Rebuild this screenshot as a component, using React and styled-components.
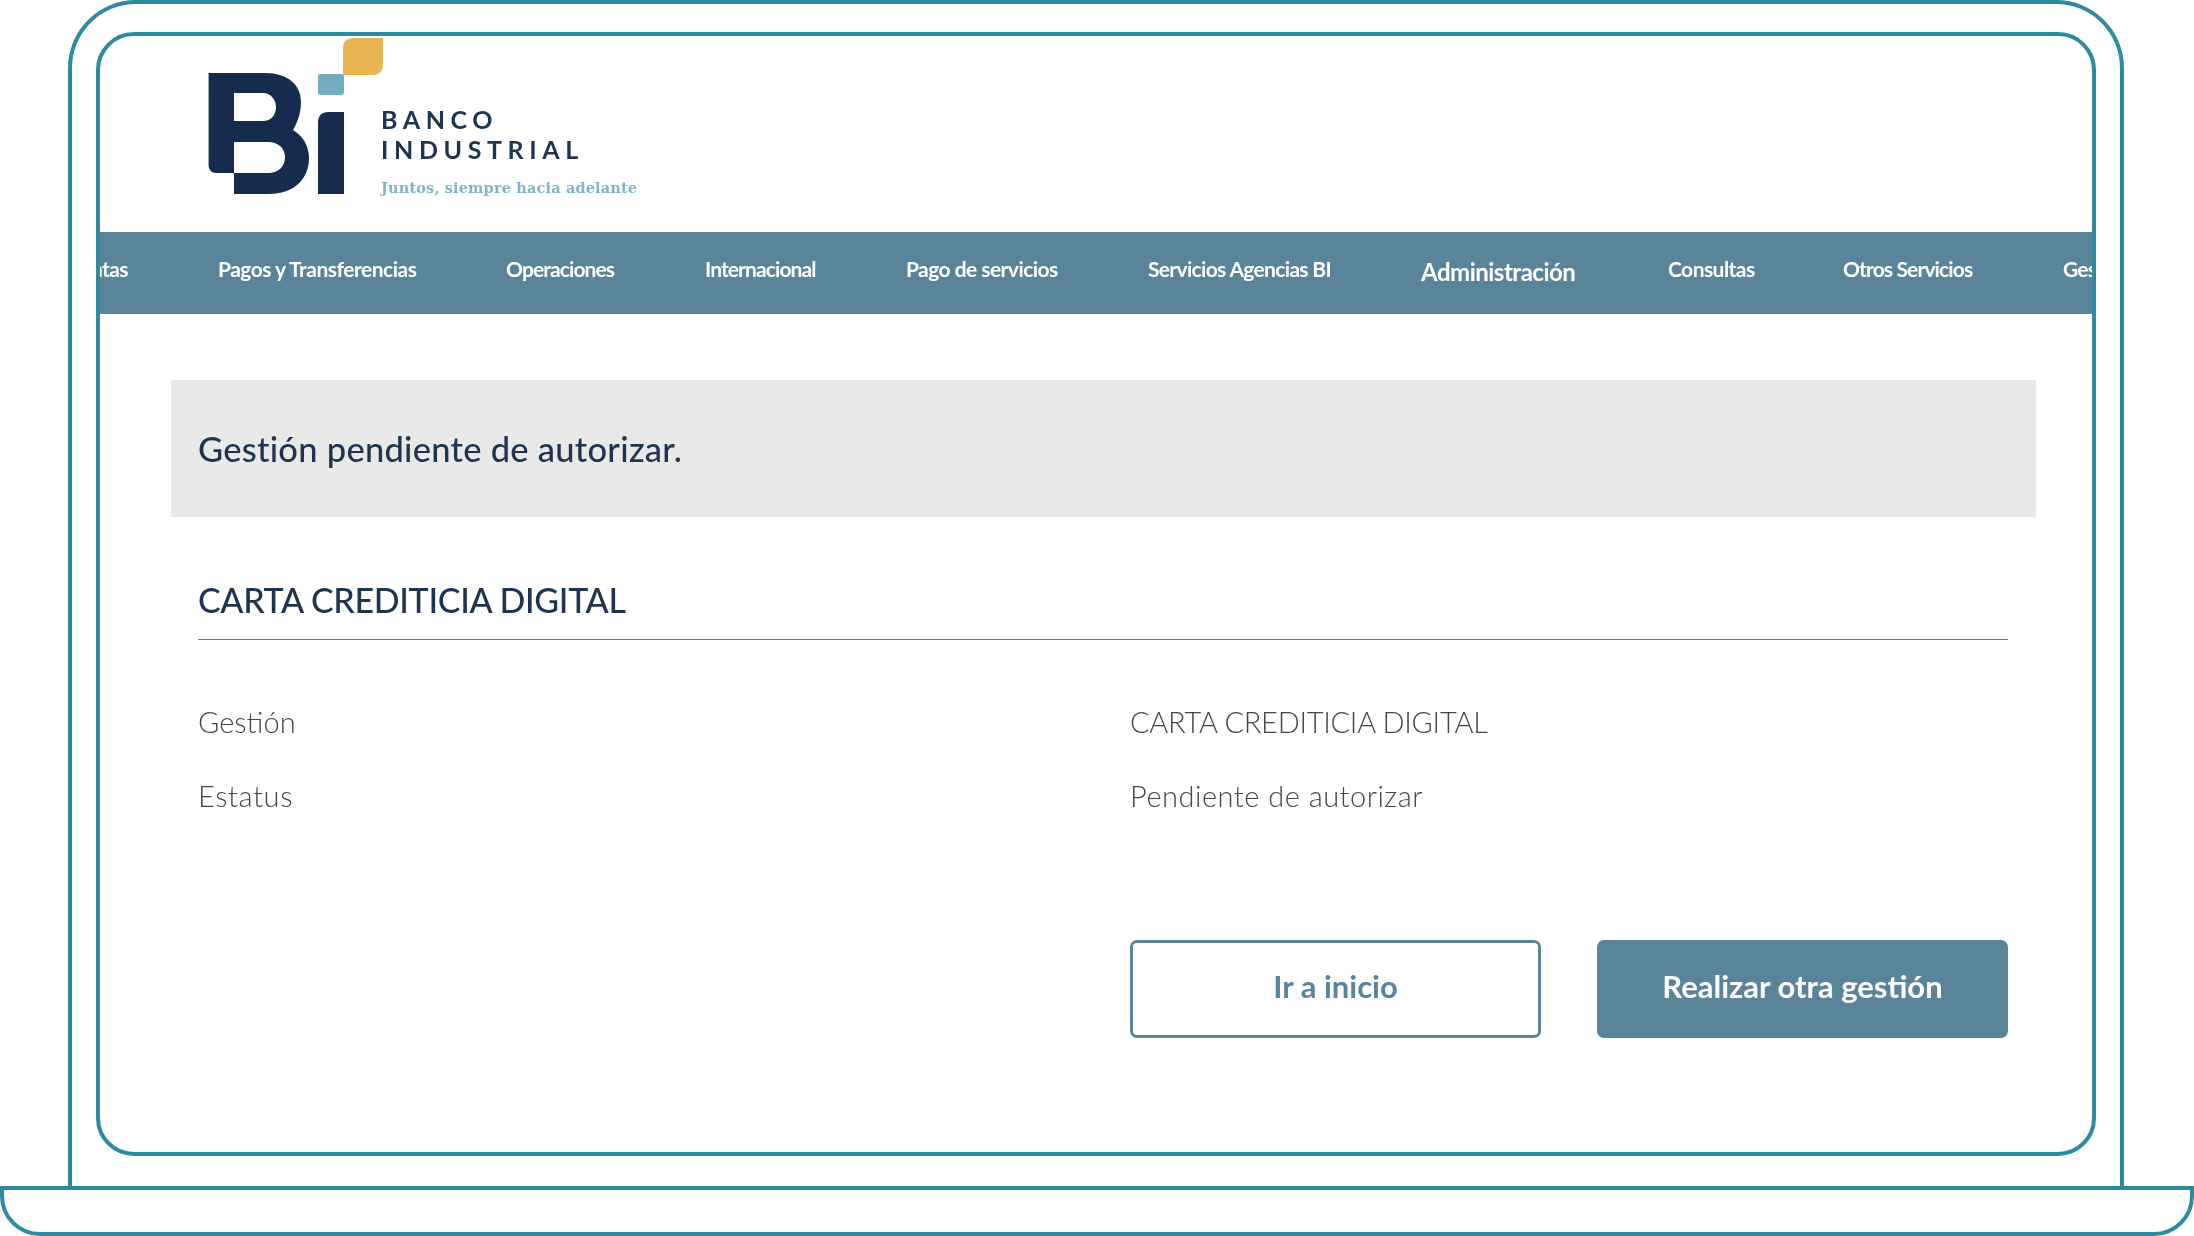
import React from "react";
import styled, { createGlobalStyle } from "styled-components";

const Global = createGlobalStyle`
  html, body { margin: 0; padding: 0; background: #fff; }
  * { box-sizing: border-box; }
`;

const teal = "#2e8b9f";
const slate = "#5a8499";
const navy = "#1f3450";

const Page = styled.div`
  width: 2194px;
  height: 1236px;
  background: #fff;
  overflow: hidden;
  font-family: "Lato", "Liberation Sans", sans-serif;
`;
const Lid = styled.div`
  width: 2056px;
  height: 1186px;
  margin-left: 68px;
  padding: 28px 24px 0;
  border: 4px solid ${teal};
  border-bottom: 0;
  border-radius: 68px 68px 0 0;
`;
const Base = styled.div`
  height: 50px;
  border: 4px solid ${teal};
  border-radius: 0 0 40px 40px;
`;
const Screen = styled.div`
  height: 1124px;
  border: 4px solid ${teal};
  border-radius: 38px;
  overflow: hidden;
  background: #fff;
`;
const Header = styled.header`
  height: 196px;
  padding: 2px 0 0 108px;
  display: flex;
  align-items: flex-start;
`;
const Mark = styled.svg`
  width: 175px;
  height: 156px;
  flex: none;
  filter: blur(0.5px);
`;
const Brand = styled.div`
  margin: 66px 0 0 -2px;
  filter: blur(0.5px);
`;
const BrandName = styled.div`
  font-weight: 700;
  font-size: 25px;
  line-height: 30px;
  letter-spacing: ${(p) => p.$ls}px;
  color: ${navy};
`;
const Tagline = styled.div`
  margin-top: 15px;
  font-family: "DejaVu Serif", serif;
  font-weight: 700;
  font-size: 14.5px;
  line-height: 18px;
  letter-spacing: 0.15px;
  color: #82b4c9;
`;
const Nav = styled.nav`
  height: 82px;
  background: ${slate};
  overflow: hidden;
  display: flex;
  align-items: center;
  gap: 90px;
  color: #fff;
  white-space: nowrap;
`;
const NavItem = styled.span`
  flex: none;
  width: ${(p) => p.$w}px;
  margin-left: ${(p) => p.$ml || 0}px;
  margin-top: ${(p) => (p.$big ? -3 : -10)}px;
  font-weight: 700;
  font-size: ${(p) => (p.$big ? 24 : 21)}px;
  letter-spacing: ${(p) => p.$ls}px;
  filter: blur(0.5px);
`;
const Content = styled.main`
  padding: 66px 56px 0 71px;
`;
const Banner = styled.div`
  height: 137px;
  background: #e9e9e9;
  padding-left: 27px;
  display: flex;
  align-items: center;
  font-size: 34.5px;
  font-weight: 500;
  letter-spacing: 0.25px;
  color: ${navy};
  filter: blur(0.4px);
`;
const Section = styled.section`
  padding: 0 28px 0 27px;
`;
const SectionTitle = styled.h2`
  margin: 0;
  height: 123px;
  padding-bottom: 19px;
  display: flex;
  align-items: flex-end;
  font-size: 34px;
  font-weight: 500;
  letter-spacing: -0.32px;
  color: ${navy};
  border-bottom: 1px solid #777;
  filter: blur(0.3px);
`;
const Rows = styled.div`
  margin-top: 67px;
  display: grid;
  grid-template-columns: 932px 1fr;
  row-gap: 45px;
  font-size: 29px;
  font-weight: 300;
  line-height: 29px;
  color: #454545;
  filter: blur(0.3px);
`;
const Cell = styled.span`
  letter-spacing: ${(p) => p.$ls || 0}px;
`;
const Actions = styled.div`
  margin-top: 130px;
  margin-left: 932px;
  display: flex;
  gap: 56px;
`;
const Button = styled.div`
  width: 411px;
  height: 98px;
  padding-bottom: 6px;
  display: flex;
  align-items: center;
  justify-content: center;
  border-radius: 7px;
  border: 3px solid ${slate};
  background: ${(p) => (p.$solid ? slate : "#fff")};
  color: ${(p) => (p.$solid ? "#fff" : slate)};
  font-size: 31px;
  font-weight: 700;
`;
const ButtonLabel = styled.span`
  filter: blur(0.5px);
`;

const navItems = [
  { t: "Cuentas", w: 72, ml: -44, ls: -0.6 },
  { t: "Pagos y Transferencias", w: 198, ls: -0.5 },
  { t: "Operaciones", w: 109, ls: -0.9 },
  { t: "Internacional", w: 111, ls: -0.9 },
  { t: "Pago de servicios", w: 152, ls: -0.55 },
  { t: "Servicios Agencias BI", w: 183, ls: -0.67 },
  { t: "Administración", w: 157, ls: -0.5, big: true },
  { t: "Consultas", w: 85, ls: -0.55 },
  { t: "Otros Servicios", w: 130, ls: -0.87 },
  { t: "Gestiones", w: 90, ls: -0.8 },
];

export default function App() {
  return (
    <Page>
      <Global />
      <Lid>
        <Screen>
          <Header>
            <Mark viewBox="0 0 175 156" aria-label="Bi">
              <path
                fill="#152c4e"
                fillRule="evenodd"
                d="M0.6 35H57C80 35 93 47 93 64C93 77 88 87 85 92C95 98 101 108 101 120C101 142 85 156 61 156H26V135H8C3 135 0.6 131 0.6 127ZM26 55H55C63 55 68 62 68 69C68 77 63 83 55 83H26ZM26 104H60C71 104 77 111 77 119C77 128 71 135 60 135H26Z"
              />
              <path fill="#152c4e" d="M110 84C110 78 114 74 120 74H136V156H110Z" />
              <rect x="110" y="36" width="26" height="21" rx="3" fill="#72abc3" />
              <path fill="#e8b552" d="M145 0H175V27C175 33 171 37 165 37H135V10C135 4 139 0 145 0Z" />
            </Mark>
            <Brand>
              <BrandName $ls={5.6}>BANCO</BrandName>
              <BrandName $ls={5.6}>INDUSTRIAL</BrandName>
              <Tagline>Juntos, siempre hacia adelante</Tagline>
            </Brand>
          </Header>
          <Nav>
            {navItems.map((n) => (
              <NavItem key={n.t} $w={n.w} $ml={n.ml} $ls={n.ls} $big={n.big}>
                {n.t}
              </NavItem>
            ))}
          </Nav>
          <Content>
            <Banner>Gestión pendiente de autorizar.</Banner>
            <Section>
              <SectionTitle>CARTA CREDITICIA DIGITAL</SectionTitle>
              <Rows>
                <Cell>Gestión</Cell>
                <Cell $ls={-0.27}>CARTA CREDITICIA DIGITAL</Cell>
                <Cell $ls={0.6}>Estatus</Cell>
                <Cell $ls={0.5}>Pendiente de autorizar</Cell>
              </Rows>
              <Actions>
                <Button>
                  <ButtonLabel>Ir a inicio</ButtonLabel>
                </Button>
                <Button $solid>
                  <ButtonLabel>Realizar otra gestión</ButtonLabel>
                </Button>
              </Actions>
            </Section>
          </Content>
        </Screen>
      </Lid>
      <Base />
    </Page>
  );
}
